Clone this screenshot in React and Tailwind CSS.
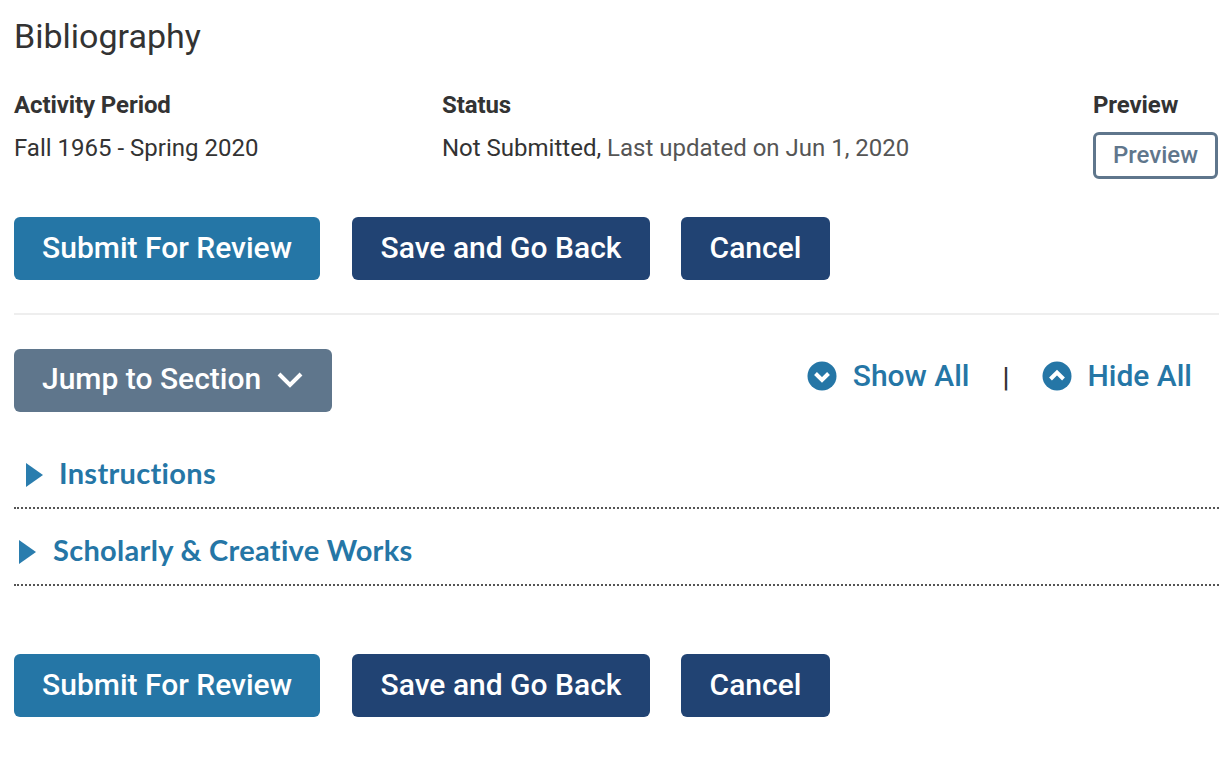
const Btn = ({ className, children }) => (
  <button className={`h-[63px] pb-[3px] rounded-md text-[30px] font-medium text-white whitespace-nowrap ${className}`}>
    {children}
  </button>
);

const Actions = () => (
  <div className="flex">
    <Btn className="bg-[#2576a6] w-[306px]">Submit For Review</Btn>
    <Btn className="bg-[#214373] w-[298px] ml-8">Save and Go Back</Btn>
    <Btn className="bg-[#214373] w-[149px] ml-[31px]">Cancel</Btn>
  </div>
);

const CircleIcon = ({ up }) => (
  <svg width="30" height="30" viewBox="0 0 30 30" className="shrink-0">
    <circle cx="15" cy="15" r="14.5" fill="#2576a6" />
    <path d={up ? 'M8.5 18 L15 11.5 L21.5 18' : 'M8.5 12.5 L15 19 L21.5 12.5'} fill="none" stroke="white" strokeWidth="4" />
  </svg>
);

const Section = ({ title, indent, gap }) => (
  <div className={`flex items-center border-b-2 border-dotted border-[#555] h-[77px] pt-[6px] ${indent}`}>
    <svg width="17" height="24" viewBox="0 0 17 24" className="shrink-0 mt-1">
      <path d="M0 0 L17 12 L0 24 Z" fill="#2a7dae" />
    </svg>
    <h3 className={`${gap} text-[29px] tracking-[0.3px] font-bold text-[#2576a6] font-['Lato',sans-serif]`}>{title}</h3>
  </div>
);

export default function App() {
  return (
    <div className="min-h-screen bg-white pl-[14px] pr-[11px] font-['Roboto',sans-serif] text-[#333]">
      <h1 className="text-[34px] leading-[38px] pt-[17px]">Bibliography</h1>

      <div className="flex mt-9">
        <div className="w-[428px]">
          <div className="text-[24px] font-bold leading-7 tracking-[-0.1px]">Activity Period</div>
          <div className="text-[24px] leading-7 mt-[15px]">Fall 1965 - Spring 2020</div>
        </div>
        <div className="flex-1">
          <div className="text-[24px] font-bold leading-7 tracking-[-0.1px]">Status</div>
          <div className="text-[24px] leading-7 mt-[15px]">
            Not Submitted, <span className="text-[#555]">Last updated on Jun 1, 2020</span>
          </div>
        </div>
        <div className="w-[126px]">
          <div className="text-[24px] font-bold leading-7 tracking-[-0.1px]">Preview</div>
          <button className="mt-[13px] w-[125px] h-[47px] pb-px border-[3px] border-[#5f768c] rounded-md text-[24px] font-medium text-[#5f768c]">
            Preview
          </button>
        </div>
      </div>

      <div className="mt-[38px] pb-[33px] border-b-2 border-[#eeeeee]">
        <Actions />
      </div>

      <div className="flex items-start justify-between mt-[34px]">
        <button className="h-[63px] w-[318px] pl-7 rounded-md bg-[#5f768c] text-[30px] font-medium text-white flex items-center">
          <span className="pb-1">Jump to Section</span>
          <svg width="26" height="16" viewBox="0 0 26 16" className="ml-4 mb-[2px]" fill="none" stroke="white" strokeWidth="4">
            <path d="M2 2 L13 13 L24 2" />
          </svg>
        </button>
        <div className="flex items-center mt-1 pr-[27px] text-[30px] font-medium text-[#2576a6]">
          <CircleIcon />
          <span className="ml-4">Show All</span>
          <span className="ml-[33px] text-[#333] text-[28px] leading-none mt-1">|</span>
          <span className="ml-[33px]"><CircleIcon up /></span>
          <span className="ml-[15px]">Hide All</span>
        </div>
      </div>

      <div className="mt-5">
        <Section title="Instructions" indent="pl-3" gap="ml-4" />
        <Section title="Scholarly & Creative Works" indent="pl-[5px]" gap="ml-[17px]" />
      </div>

      <div className="mt-[68px]">
        <Actions />
      </div>
    </div>
  );
}
